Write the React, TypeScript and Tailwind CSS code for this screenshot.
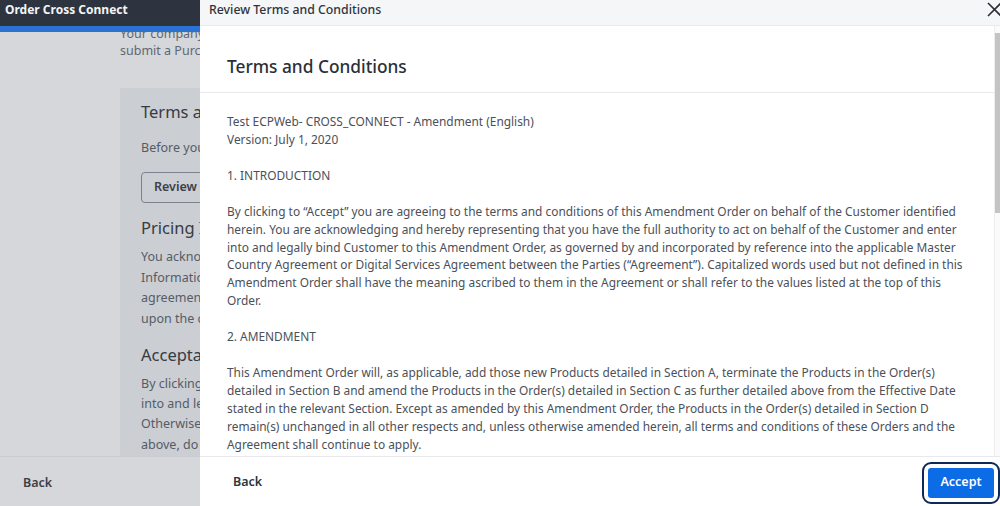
const intro = [
  'By clicking to “Accept” you are agreeing to the terms and conditions of this Amendment Order on behalf of the Customer identified',
  'herein. You are acknowledging and hereby representing that you have the full authority to act on behalf of the Customer and enter',
  'into and legally bind Customer to this Amendment Order, as governed by and incorporated by reference into the applicable Master',
  'Country Agreement or Digital Services Agreement between the Parties (“Agreement”). Capitalized words used but not defined in this',
  'Amendment Order shall have the meaning ascribed to them in the Agreement or shall refer to the values listed at the top of this',
  'Order.',
]

const amendment = [
  'This Amendment Order will, as applicable, add those new Products detailed in Section A, terminate the Products in the Order(s)',
  'detailed in Section B and amend the Products in the Order(s) detailed in Section C as further detailed above from the Effective Date',
  'stated in the relevant Section. Except as amended by this Amendment Order, the Products in the Order(s) detailed in Section D',
  'remain(s) unchanged in all other respects and, unless otherwise amended herein, all terms and conditions of these Orders and the',
  'Agreement shall continue to apply.',
]

function Lines({ lines }: { lines: string[] }) {
  return (
    <p className="mb-[18px]">
      {lines.map((l) => (
        <span key={l} className="block whitespace-nowrap">
          {l}
        </span>
      ))}
    </p>
  )
}

export default function App() {
  return (
    <div className="relative h-[506px] w-[1000px] overflow-hidden font-['Noto_Sans',sans-serif]">
      {/* page behind the drawer, dimmed */}
      <div className="flex h-full flex-col bg-[#d5d7da]">
        <div className="h-[26px] shrink-0 bg-[#2e343f] px-[5px] text-[12px] font-bold leading-[20px] text-[#f3f4f6]">
          Order Cross Connect
        </div>
        <div className="h-[6px] shrink-0 bg-[#2c72d4]" />
        <div className="flex-1 overflow-hidden pl-[120px]">
          <p className="-mt-[7px] whitespace-nowrap text-[12.5px] leading-[17px] text-[#606775]">
            Your company may require a purchase order number. If so, please
            <br />
            submit a Purchase Order number before placing this order.
          </p>
          <div className="mt-[29px] h-[400px] bg-[#cbced2] pl-[21px] pt-[12px] whitespace-nowrap">
            <h2 className="text-[16.5px] leading-[24px] text-[#363b44]">Terms and Conditions</h2>
            <p className="mt-[14px] text-[12.5px] leading-[20px] text-[#555c68]">
              Before you submit your order, please review the terms and conditions.
            </p>
            <button className="mt-[14px] h-[31px] rounded-[4px] border border-[#7c828c] px-[12px] text-[12.5px] font-semibold text-[#3c414a]">
              Review Terms and Conditions
            </button>
            <h2 className="mt-[13px] text-[16.5px] leading-[24px] text-[#363b44]">Pricing Information</h2>
            <div className="mt-[7px] text-[12.5px] leading-[20.7px] text-[#555c68]">
              <div>You acknowledge that the pricing shown in the Pricing</div>
              <div>Information section is subject to the terms of your</div>
              <div>agreement and any applicable taxes, which will be calculated</div>
              <div>upon the completion of your order.</div>
            </div>
            <h2 className="mt-[13px] text-[16.5px] leading-[24px] text-[#363b44]">Acceptance</h2>
            <div className="mt-[7px] text-[12.5px] leading-[20.3px] text-[#555c68]">
              <div>By clicking Accept you confirm that you have authority to enter</div>
              <div>into and legally bind the Customer to this order.</div>
              <div>Otherwise, if you do not agree with the terms described</div>
              <div>above, do not submit this order.</div>
            </div>
          </div>
        </div>
        <div className="flex h-[50px] shrink-0 items-center border-t border-[#c9ccd0] pl-[23px] pt-[3px]">
          <span className="text-[12.5px] font-semibold text-[#3a3f48]">Back</span>
        </div>
      </div>

      {/* drawer */}
      <div className="absolute inset-y-0 left-[200px] right-0 flex flex-col bg-white">
        <div className="relative h-[26px] shrink-0 border-b border-[#e9ebee] bg-[#f5f6f8] pl-[9px] text-[12.3px] font-medium leading-[20px] text-[#2f343c]">
          Review Terms and Conditions
          <svg
            className="absolute left-[787px] top-[2px]"
            width="15"
            height="15"
            viewBox="0 0 15 15"
            fill="none"
            stroke="#2b2f36"
            strokeWidth="1.6"
          >
            <path d="M1 1 L14 14 M14 1 L1 14" />
          </svg>
        </div>

        <div className="flex min-h-0 flex-1">
          <div className="min-w-0 flex-1 overflow-hidden">
            <div className="h-[67px] border-b border-[#e7e9ec] pl-[27px] pt-[29px]">
              <h1 className="text-[17.3px] font-medium leading-[24px] text-[#2a2f37]">Terms and Conditions</h1>
            </div>
            <div className="px-[27px] pt-[20px] text-[11.9px] leading-[17.9px] text-[#4b5059]">
              <Lines lines={['Test ECPWeb- CROSS_CONNECT - Amendment (English)', 'Version: July 1, 2020']} />
              <Lines lines={['1. INTRODUCTION']} />
              <Lines lines={intro} />
              <Lines lines={['2. AMENDMENT']} />
              <Lines lines={amendment} />
            </div>
          </div>
          <div className="w-[6px] shrink-0 border-l border-[#ededed] bg-[#fafafa]">
            <div className="mt-[7px] h-[180px] bg-[#c4c4c4]" />
          </div>
        </div>

        <div className="flex h-[50px] shrink-0 items-center justify-between border-t border-[#e7e9ec] pl-[33px] pr-[6px] pt-[2px]">
          <span className="text-[12.5px] font-semibold text-[#2f343c]">Back</span>
          <button className="h-[30px] w-[66px] rounded-[3px] bg-[#0b6ce6] text-[12.5px] font-semibold text-white outline-2 outline-offset-[4px] outline-[#0d2a57] outline-solid">
            Accept
          </button>
        </div>
      </div>
    </div>
  )
}
